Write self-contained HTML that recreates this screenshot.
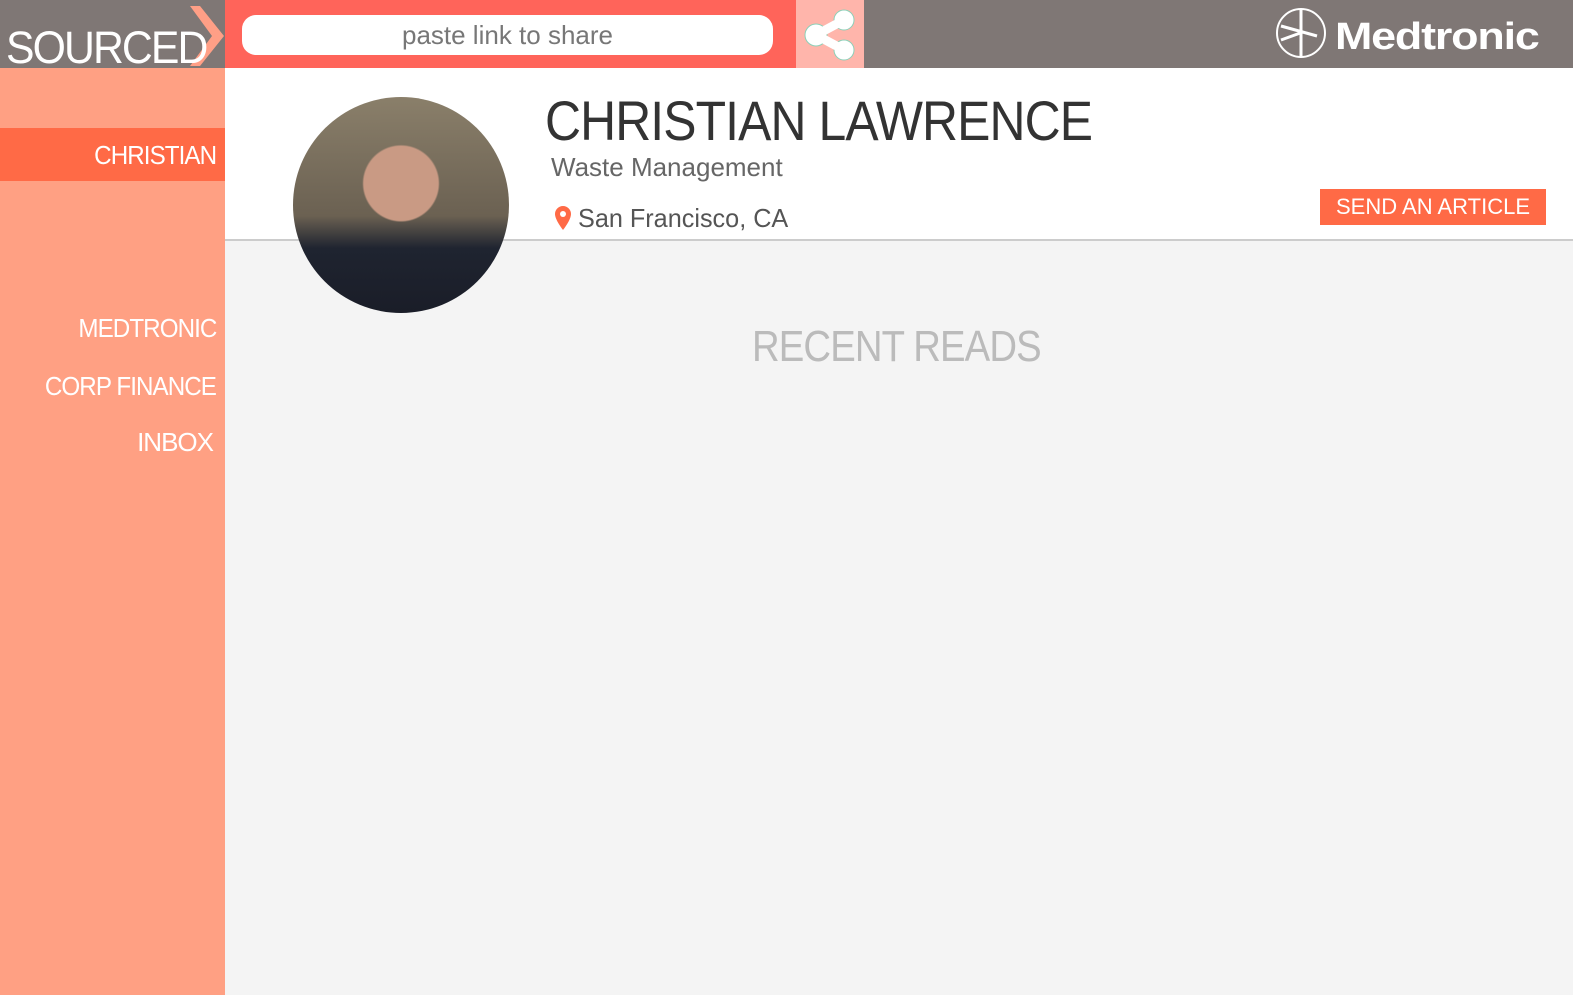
<!DOCTYPE html>
<html><head><style>
*{margin:0;padding:0;box-sizing:border-box}
body{width:1573px;height:995px;overflow:hidden;background:#f4f4f4;font-family:"Liberation Sans",sans-serif;position:relative}
.abs{position:absolute;white-space:nowrap}
</style></head><body>
<div class="abs" style="left:0;top:0;width:225px;height:995px;background:#ffa083"></div>
<div class="abs" style="left:0;top:0;width:1573px;height:68px;background:#7f7775"></div>
<div class="abs" style="left:225px;top:0;width:571px;height:68px;background:#ff645a"></div>
<div class="abs" style="left:796px;top:0;width:68px;height:68px;background:#ffb5ab"></div>
<svg class="abs" style="left:186px;top:6px" width="40" height="60"><polygon points="4,0 14,0 38,30 14,60 4,60 26,30" fill="#ff9f86"/></svg>
<div class="abs" style="left:6px;top:22px;font-size:45px;color:#fff;letter-spacing:-2px;transform:scaleX(.95);transform-origin:left">SOURCED</div>
<div class="abs" style="left:242px;top:15px;width:531px;height:40px;background:#fff;border-radius:14px;text-align:center;font-size:26px;line-height:40px;color:#777">paste link to share</div>
<svg class="abs" style="left:800px;top:6px" width="60" height="56"><g fill="#fff" stroke="#8cd0b8" stroke-width="1"><path d="M16 24 L44 9 L44 19 L16 34Z M16 24 L44 39 L44 49 L16 34Z" stroke="none"/><circle cx="44" cy="14" r="10"/><circle cx="44" cy="44" r="10"/><circle cx="16" cy="29" r="11"/><path d="M16 24 L44 9 L44 19 L16 34Z M16 24 L44 39 L44 49 L16 34Z" stroke="none"/></g></svg>
<svg class="abs" style="left:1273px;top:6px" width="56" height="54"><circle cx="28" cy="27" r="24" fill="none" stroke="#fff" stroke-width="2"/><path d="M28 3V51M8 20L44 30M8 34L30 26" stroke="#fff" stroke-width="3" fill="none"/></svg>
<div class="abs" style="left:1335px;top:16px;font-size:38px;font-weight:bold;color:#fff;letter-spacing:-1px;transform:scaleX(1.18);transform-origin:left">Medtronic</div>
<div class="abs" style="left:225px;top:68px;width:1348px;height:173px;background:#fff;border-bottom:2px solid #ccc"></div>
<div class="abs" style="left:0;top:128px;width:225px;height:53px;background:#ff6a46"></div>
<div class="abs" style="right:1357px;top:140px;font-size:26px;color:#fff;letter-spacing:-1px;transform:scaleX(.93);transform-origin:right">CHRISTIAN</div>
<div class="abs" style="right:1357px;top:313px;font-size:26px;color:#fff;letter-spacing:-1px;transform:scaleX(.93);transform-origin:right">MEDTRONIC</div>
<div class="abs" style="right:1357px;top:371px;font-size:26px;color:#fff;letter-spacing:-1px;transform:scaleX(.93);transform-origin:right">CORP FINANCE</div>
<div class="abs" style="right:1360px;top:427px;font-size:26px;color:#fff;letter-spacing:-1px">INBOX</div>
<div class="abs" style="left:293px;top:97px;width:216px;height:216px;border-radius:50%;background:radial-gradient(circle at 50% 40%,#c99a84 0 22%,transparent 23%),linear-gradient(180deg,#8a7f6a 0,#6b6152 55%,#1f2430 70%,#1a1d28 100%)"></div>
<div class="abs" style="left:545px;top:88px;font-size:56px;color:#333;letter-spacing:-1px;transform:scaleX(.89);transform-origin:left">CHRISTIAN LAWRENCE</div>
<div class="abs" style="left:551px;top:152px;font-size:26px;color:#666">Waste Management</div>
<svg class="abs" style="left:553px;top:205px" width="20" height="26"><path d="M10 1A8 8 0 0 1 18 9C18 15 10 25 10 25S2 15 2 9A8 8 0 0 1 10 1Z" fill="#ff6a46"/><circle cx="10" cy="9" r="3" fill="#fff"/></svg>
<div class="abs" style="left:578px;top:203px;font-size:26px;color:#555;transform:scaleX(.97);transform-origin:left">San Francisco, CA</div>
<div class="abs" style="left:1320px;top:189px;width:226px;height:36px;background:#ff6a46;color:#fff;font-size:22px;text-align:center;line-height:36px">SEND AN ARTICLE</div>
<div class="abs" style="left:752px;top:322px;font-size:44px;color:#bbb;letter-spacing:-1px;transform:scaleX(.87);transform-origin:left">RECENT READS</div>
</body></html>
